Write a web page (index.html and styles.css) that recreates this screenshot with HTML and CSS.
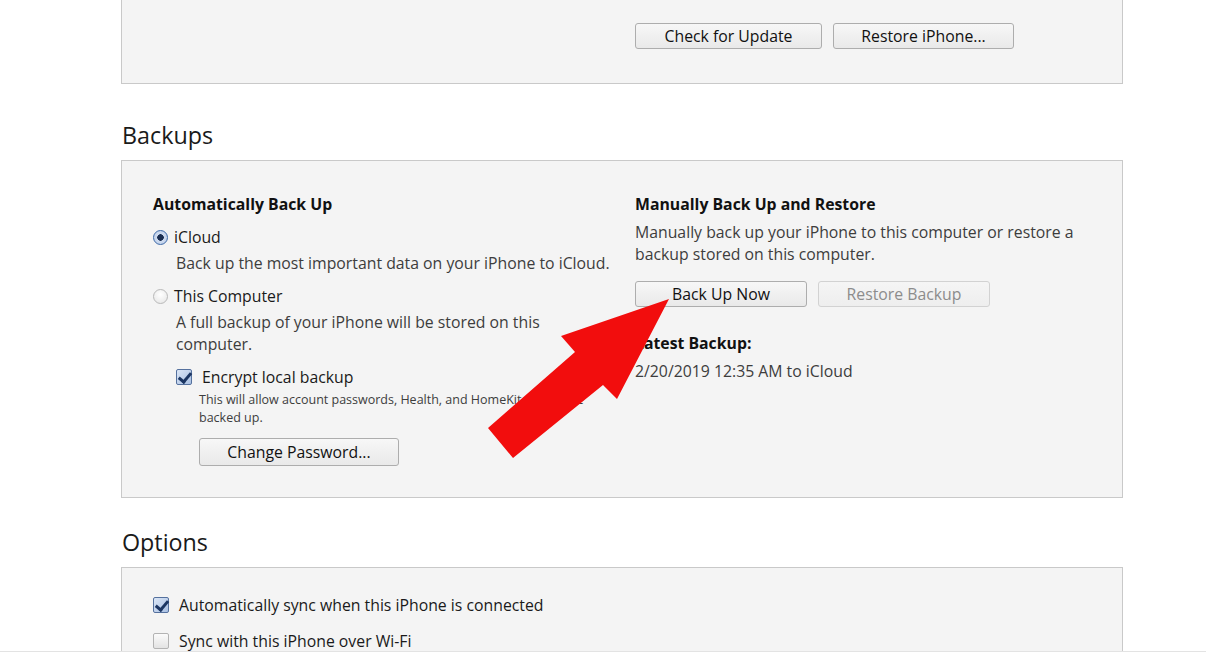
FILE: index.html
```html
<!DOCTYPE html>
<html lang="en">
<head>
<meta charset="utf-8">
<title>iPhone Summary</title>
<link rel="stylesheet" href="styles.css">
</head>
<body>
<div class="viewport">
  <div class="page">
    <section class="panel panel-top">
      <div class="col"></div>
      <div class="col">
        <div class="btn-row">
          <button class="btn w186">Check for Update</button>
          <button class="btn w180">Restore iPhone...</button>
        </div>
      </div>
    </section>

    <h2 class="section-title title-backups">Backups</h2>
    <section class="panel panel-backups">
      <div class="col">
        <div class="label-bold">Automatically Back Up</div>
        <div class="option opt-first">
          <span class="radio checked"></span><span>iCloud</span>
        </div>
        <div class="desc">Back up the most important data on your iPhone to iCloud.</div>
        <div class="option">
          <span class="radio"></span><span>This Computer</span>
        </div>
        <div class="desc">A full backup of your iPhone will be stored on this<br>computer.</div>
        <div class="sub">
          <div class="option">
            <span class="check checked"></span><span>Encrypt local backup</span>
          </div>
          <div class="small">This will allow account passwords, Health, and HomeKit data to be<br>backed up.</div>
          <button class="btn w200 btn-pass">Change Password...</button>
        </div>
      </div>
      <div class="col">
        <div class="label-bold">Manually Back Up and Restore</div>
        <div class="desc desc-right">Manually back up your iPhone to this computer or restore a<br>backup stored on this computer.</div>
        <div class="btn-row btn-row-backup">
          <button class="btn w172">Back Up Now</button>
          <button class="btn w172 disabled">Restore Backup</button>
        </div>
        <div class="label-bold latest">Latest Backup:</div>
        <div class="desc desc-date">2/20/2019 12:35 AM to iCloud</div>
      </div>
    </section>

    <h2 class="section-title title-options">Options</h2>
    <section class="panel panel-options">
      <div class="col col-full">
        <div class="option">
          <span class="check checked"></span><span>Automatically sync when this iPhone is connected</span>
        </div>
        <div class="option opt-wifi">
          <span class="check"></span><span>Sync with this iPhone over Wi-Fi</span>
        </div>
      </div>
    </section>
  </div>

  <svg class="arrow" width="1206" height="663" viewBox="0 0 1206 663" aria-hidden="true">
    <polygon points="669,299 561,336 575,352 488,428 513,458 603,385 617,399" fill="#f20d0d"/>
  </svg>
</div>
<div class="footer-line"></div>
</body>
</html>
```

FILE: styles.css
```css
html, body {
  margin: 0;
  padding: 0;
  background: #ffffff;
}

body {
  font-family: "Open Sans", "Noto Sans", "Liberation Sans", sans-serif;
  color: #1c1c1c;
  font-size: 15.8px;
  width: 1206px;
  height: 663px;
  overflow: hidden;
}

.viewport {
  position: relative;
  height: 651px;
  overflow: hidden;
}

.page {
  margin-left: 121px;
  width: 1002px;
}

.panel {
  background: #f4f4f4;
  border: 1px solid #c9c9c9;
  display: grid;
  grid-template-columns: 482px 1fr;
  padding-left: 31px;
  box-sizing: border-box;
}

.panel-top {
  border-top: none;
  height: 84px;
  padding-top: 23px;
}

.btn-row {
  display: flex;
  gap: 11px;
}

.btn {
  font-family: inherit;
  font-size: 15.8px;
  color: #111;
  height: 26px;
  padding: 0;
  border: 1px solid #adadad;
  border-radius: 3px;
  background: linear-gradient(#f7f7f7, #e9e9e9);
  box-sizing: border-box;
  line-height: 22px;
  text-align: center;
}

.btn.disabled {
  color: #8c8c8c;
  border-color: #d2d2d2;
  background: linear-gradient(#f5f5f5, #eeeeee);
}

.w186 { width: 187px; }
.w180 { width: 181px; }
.w200 { width: 200px; }
.w172 { width: 172px; }

.section-title {
  font-weight: 400;
  font-size: 23.3px;
  line-height: 32px;
  height: 32px;
  margin: 0 0 0 1px;
  color: #1a1a1a;
}

.title-backups {
  margin-top: 35px;
  margin-bottom: 9px;
}

.title-options {
  margin-top: 28px;
  margin-bottom: 9px;
}

.panel-backups {
  height: 338px;
  padding-top: 32px;
}

.label-bold {
  font-weight: 700;
  line-height: 22px;
  color: #111;
}

.option {
  display: flex;
  align-items: center;
  gap: 6px;
  line-height: 22px;
  margin-top: 11px;
  color: #1a1a1a;
}

.desc {
  color: #3d3d3d;
  line-height: 22px;
  margin-top: 4px;
  padding-left: 23px;
}

.desc-right {
  padding-left: 0;
  margin-top: 6px;
}

.desc-date {
  padding-left: 0;
  margin-top: 6px;
}

.btn-row-backup {
  margin-top: 16px;
}

.latest {
  margin-top: 25px;
}

.sub {
  padding-left: 23px;
}

.sub .option {
  gap: 10px;
}

.small {
  font-size: 12.5px;
  line-height: 18px;
  color: #3d3d3d;
  margin-top: 3px;
  padding-left: 23px;
}

.btn-pass {
  margin-top: 11px;
  margin-left: 23px;
  height: 28px;
}

.radio {
  width: 15px;
  height: 15px;
  border-radius: 50%;
  border: 1px solid #b9b9b9;
  background: radial-gradient(circle at 50% 35%, #ffffff, #e4e4e4);
  box-sizing: border-box;
  position: relative;
  flex: none;
}

.radio.checked {
  border-color: #3e6aa8;
  background: radial-gradient(circle, #1b2f52 0 3px, #cfdcf0 3.5px, #b9cbe7 100%);
}

.check {
  width: 16px;
  height: 16px;
  border: 1px solid #b3b3b3;
  border-radius: 2px;
  background: linear-gradient(#fbfbfb, #e3e3e3);
  box-sizing: border-box;
  flex: none;
  position: relative;
}

.check.checked {
  border-color: #55719e;
  background: linear-gradient(135deg, #dbe6f6, #a9c0e3);
}

.check.checked::after {
  content: "";
  position: absolute;
  left: 4px;
  top: 0px;
  width: 5px;
  height: 10px;
  border-right: 3px solid #1c3663;
  border-bottom: 3px solid #1c3663;
  transform: rotate(40deg);
}

.panel-options {
  height: 100px;
  padding-top: 18px;
}

.col-full {
  grid-column: 1 / span 2;
}

.panel-options .option {
  gap: 10px;
  margin-top: 8px;
}

.panel-options .opt-wifi {
  margin-top: 14px;
}

.arrow {
  position: absolute;
  left: 0;
  top: 0;
  pointer-events: none;
}

.footer-line {
  height: 12px;
  border-top: 1px solid #e3e3e3;
  background: #ffffff;
}
```
